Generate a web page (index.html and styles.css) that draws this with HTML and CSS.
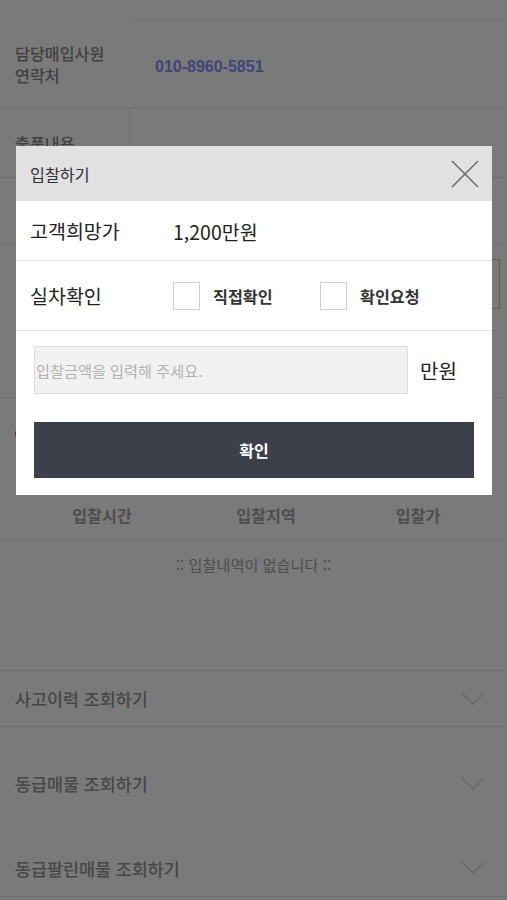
FILE: index.html
```html
<!DOCTYPE html>
<html lang="ko">
<head>
  <meta charset="UTF-8" />
  <meta name="viewport" content="width=device-width, initial-scale=1.0"/>
  <title>입찰하기</title>
  <link rel="stylesheet" href="styles.css">
</head>
<body>

  <!-- Car detail page (behind the dim) -->
  <div class="page">
    <div class="info-row row-top">
      <div class="info-label"></div>
      <div class="info-value line-under"></div>
    </div>
    <div class="info-row row-contact">
      <div class="info-label">담당매입사원<br>연락처</div>
      <div class="info-value phone">010-8960-5851</div>
    </div>
    <div class="info-row row-desc">
      <div class="info-label side-line">출품내용</div>
      <div class="info-value"></div>
    </div>
    <div class="info-row row-extra">
      <div class="info-label"></div>
      <div class="info-value"></div>
    </div>
    <div class="info-row row-memo">
      <div class="info-label"></div>
      <div class="info-value"><div class="memo-box"></div></div>
    </div>

    <div class="bid-section">
      <h3 class="bid-title">입찰현황</h3>
      <div class="bid-head">
        <span>입찰시간</span>
        <span>입찰지역</span>
        <span>입찰가</span>
      </div>
      <div class="bid-empty">:: 입찰내역이 없습니다 ::</div>
    </div>

    <div class="accordion">
      <div class="acc-item first">
        <span>사고이력 조회하기</span>
        <svg class="chevron" width="24" height="14" viewBox="0 0 24 14"><path d="M1 1 L12 12 L23 1" fill="none" stroke="currentColor" stroke-width="1.4"/></svg>
      </div>
      <div class="acc-item">
        <span>동급매물 조회하기</span>
        <svg class="chevron" width="24" height="14" viewBox="0 0 24 14"><path d="M1 1 L12 12 L23 1" fill="none" stroke="currentColor" stroke-width="1.4"/></svg>
      </div>
      <div class="acc-item last">
        <span>동급팔린매물 조회하기</span>
        <svg class="chevron" width="24" height="14" viewBox="0 0 24 14"><path d="M1 1 L12 12 L23 1" fill="none" stroke="currentColor" stroke-width="1.4"/></svg>
      </div>
    </div>
  </div>

  <!-- Dim + bid popup -->
  <div class="dim"></div>

  <div class="modal">
    <div class="modal-header">
      <span>입찰하기</span>
      <button class="close-btn" aria-label="닫기">
        <svg width="28" height="28" viewBox="0 0 28 28"><path d="M1 1 L27 27 M27 1 L1 27" stroke="#6a6a6a" stroke-width="1.5"/></svg>
      </button>
    </div>

    <div class="modal-row price-row">
      <span class="row-label">고객희망가</span>
      <span class="row-value">1,200만원</span>
    </div>

    <div class="modal-row check-row">
      <span class="row-label">실차확인</span>
      <label class="check"><input type="checkbox"> 직접확인</label>
      <label class="check"><input type="checkbox"> 확인요청</label>
    </div>

    <div class="modal-body">
      <div class="amount-row">
        <input type="text" class="amount-input" placeholder="입찰금액을 입력해 주세요.">
        <span class="unit">만원</span>
      </div>
      <button class="confirm-btn">확인</button>
    </div>
  </div>

</body>
</html>
```

FILE: styles.css
```css
:root {
  --dim: rgba(0, 0, 0, 0.52);
  --under-line: #ececec;
  --under-text: #888888;
  --modal-line: #e2e2e2;
  --btn-dark: #3d404b;
}

* {
  box-sizing: border-box;
  margin: 0;
  padding: 0;
}

body {
  font-family: "Noto Sans CJK KR", "Noto Sans", sans-serif;
  background-color: #ffffff;
  color: #222;
  width: 507px;
  height: 900px;
  overflow: hidden;
}

/* ---------- page behind ---------- */

.info-row {
  display: grid;
  grid-template-columns: 130px 1fr;
  border-bottom: 1px solid var(--under-line);
}

.row-top {
  height: 21px;
  border-bottom: none;
}

.line-under {
  border-bottom: 1px solid var(--under-line);
  margin-left: 3px;
}

.row-contact { height: 87px; }
.row-desc { height: 70px; }
.row-extra { height: 67px; }
.row-memo { height: 153px; }

.info-label {
  display: flex;
  align-items: center;
  padding-left: 15px;
  font-size: 16.2px;
  line-height: 22px;
  font-weight: 500;
  color: var(--under-text);
}

.side-line {
  border-right: 1px solid #f2f2f2;
}

.info-value {
  display: flex;
  align-items: center;
  padding-left: 25px;
}

.phone {
  font-family: "Liberation Sans", Arial, sans-serif;
  font-weight: 700;
  font-size: 16px;
  color: #8e8eff;
  padding-top: 6px;
}

.row-memo .info-value {
  align-items: flex-start;
  justify-content: flex-end;
  padding: 14px 7px 0 0;
}

.memo-box {
  width: 60px;
  height: 50px;
  border: 1px solid #f0b890;
}

.bid-section {
  height: 272px;
}

.bid-title {
  padding: 26px 0 0 14px;
  font-size: 17px;
  font-weight: 700;
  color: var(--under-text);
  height: 92px;
}

.bid-head {
  display: grid;
  grid-template-columns: 164px 164px 140px;
  padding: 0 20px;
  height: 51px;
  align-items: center;
  border-bottom: 1px solid #f0f0f0;
  font-size: 16.2px;
  font-weight: 700;
  color: #a4a4a4;
  text-align: center;
}

.bid-empty {
  padding-top: 12px;
  text-align: center;
  font-size: 15.2px;
  color: #a4a4a4;
}

.accordion {
  display: flex;
  flex-direction: column;
  gap: 28px;
}

.acc-item {
  height: 57px;
  display: flex;
  align-items: center;
  justify-content: space-between;
  padding: 0 22px 0 15px;
  font-size: 17.4px;
  font-weight: 500;
  color: #959595;
}

.acc-item.first {
  border-top: 1px solid var(--under-line);
  border-bottom: 1px solid var(--under-line);
}

.acc-item.last {
  border-bottom: 1px solid var(--under-line);
}

.chevron {
  color: #d8d8d8;
}

/* ---------- dim + popup ---------- */

.dim {
  position: fixed;
  inset: 0;
  background: var(--dim);
}

.modal {
  position: absolute;
  top: 146px;
  left: 16px;
  width: 476px;
  height: 349px;
  background: #ffffff;
}

.modal-header {
  height: 55px;
  background: #e1e1e1;
  display: flex;
  align-items: center;
  justify-content: space-between;
  padding: 0 13px 0 14px;
  font-size: 16.2px;
  color: #333;
}

.close-btn {
  background: none;
  border: none;
  width: 28px;
  height: 28px;
  display: flex;
  cursor: pointer;
}

.modal-row {
  display: flex;
  align-items: center;
  padding-left: 14px;
  border-bottom: 1px solid var(--modal-line);
  font-size: 19.5px;
  color: #222;
}

.price-row {
  height: 60px;
}

.row-label {
  width: 143px;
}

.row-value {
  padding-top: 1px;
}

.check-row {
  height: 70px;
}

.check {
  display: flex;
  align-items: center;
  gap: 13px;
  font-size: 16.2px;
  font-weight: 700;
  color: #333;
  width: 147px;
}

.check input {
  appearance: none;
  -webkit-appearance: none;
  width: 27px;
  height: 28px;
  border: 1.5px solid #d2d2d2;
  background: #fff;
  margin: 0;
}

.modal-body {
  padding: 15px 18px 18px;
}

.amount-row {
  display: flex;
  align-items: center;
  gap: 12px;
}

.amount-input {
  width: 374px;
  height: 48px;
  background: #f1f1f1;
  border: 1px solid #dcdcdc;
  padding: 0 0 0 1px;
  font-family: inherit;
  font-size: 15.2px;
  color: #333;
}

.amount-input::placeholder {
  color: #b2b2b2;
}

.unit {
  font-size: 20px;
  color: #222;
}

.confirm-btn {
  margin-top: 28px;
  width: 440px;
  height: 56px;
  background: var(--btn-dark);
  border: none;
  color: #ffffff;
  font-family: inherit;
  font-size: 16px;
  font-weight: 700;
  cursor: pointer;
}
```
